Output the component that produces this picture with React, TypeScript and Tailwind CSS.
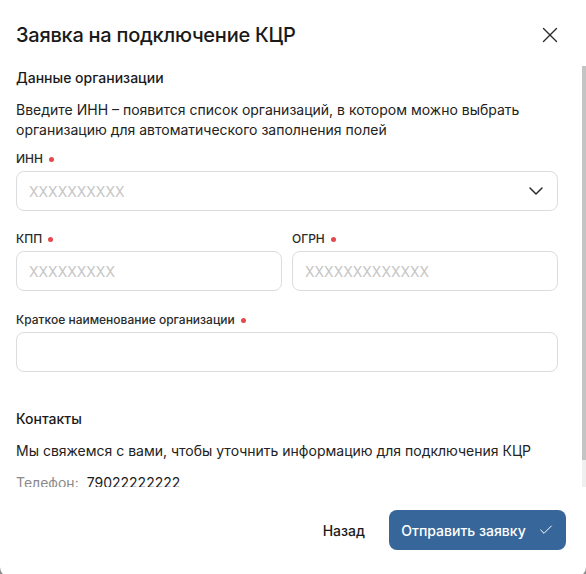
import { X, ChevronDown, Check } from 'lucide-react';

function Label({ text }: { text: string }) {
  return (
    <div className="flex items-center gap-1 h-4 mb-1 text-[12px] font-medium text-[#2b2b2b]">
      <span>{text}</span>
      <span className="w-[5px] h-[5px] rounded-full bg-[#e5484d] ml-0.5" />
    </div>
  );
}

function Field({ placeholder, select }: { placeholder?: string; select?: boolean }) {
  return (
    <div className="relative">
      <input
        readOnly
        placeholder={placeholder}
        className="w-full h-10 rounded-lg border border-[#dcdcdc] bg-white px-3 text-[14px] text-[#1a1a1a] placeholder:text-[#c6c6c6] outline-none"
      />
      {select && (
        <ChevronDown
          className="absolute right-[10px] top-[8px] w-6 h-6 text-[#2b2b2b]"
          strokeWidth={1.5}
        />
      )}
    </div>
  );
}

export default function App() {
  return (
    <div className="h-[574px] overflow-hidden bg-[#8c8c8c] font-['Inter','Noto_Sans',sans-serif]">
      <div className="h-[577px] bg-white rounded-b-[10px] flex flex-col">
        <div className="h-[66px] shrink-0 flex items-start justify-between pl-4 pr-[23px] pt-[21px]">
          <h1 className="text-[20px] leading-7 font-medium tracking-[-0.25px] text-[#1a1a1a]">Заявка на подключение КЦР</h1>
          <X className="w-[26px] h-[26px] mt-[1px] text-[#2b2b2b]" strokeWidth={1.25} />
        </div>

        <div className="h-[421px] shrink-0 flex">
          <div className="flex-1 overflow-hidden pl-4 pr-6 pt-0.5 pb-6 text-[#1a1a1a]">
            <h2 className="text-[14px] leading-5 font-medium">Данные организации</h2>
            <p className="mt-3 text-[14px] leading-5 text-[#222]">
              Введите ИНН – появится список организаций, в котором можно выбрать организацию для автоматического заполнения полей
            </p>

            <div className="mt-[11px]">
              <Label text="ИНН" />
              <Field placeholder="XXXXXXXXXX" select />
            </div>

            <div className="mt-5 grid grid-cols-2 gap-[10px]">
              <div>
                <Label text="КПП" />
                <Field placeholder="XXXXXXXXX" />
              </div>
              <div>
                <Label text="ОГРН" />
                <Field placeholder="XXXXXXXXXXXXX" />
              </div>
            </div>

            <div className="mt-[21px]">
              <Label text="Краткое наименование организации" />
              <Field />
            </div>

            <h2 className="mt-[37px] text-[14px] leading-5 font-medium">Контакты</h2>
            <p className="mt-3 text-[14px] leading-5 text-[#222]">
              Мы свяжемся с вами, чтобы уточнить информацию для подключения КЦР
            </p>
            <div className="mt-3 flex gap-2 text-[14px] leading-5">
              <span className="text-[#8a8a8a]">Телефон:</span>
              <span className="text-[#1a1a1a]">79022222222</span>
            </div>
          </div>
          <div className="w-[4px] bg-[#efefef]">
            <div className="h-[394px] bg-[#c4c4c4]" />
          </div>
        </div>

        <div className="flex-1 flex items-start justify-end gap-6 pr-[20px] pt-[23px]">
          <button className="h-10 text-[14px] font-medium text-[#1a1a1a]">Назад</button>
          <button className="h-10 w-[177px] rounded-lg bg-[#37679a] text-white text-[14px] font-medium flex items-center justify-center gap-3">
            Отправить заявку
            <Check className="w-4 h-4" strokeWidth={1.5} />
          </button>
        </div>
      </div>
    </div>
  );
}
